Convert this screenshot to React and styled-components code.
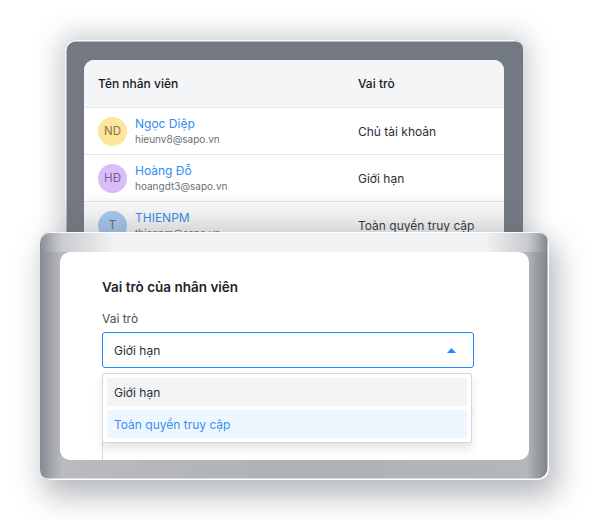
import React from "react";
import styled, { createGlobalStyle } from "styled-components";

const Global = createGlobalStyle`
  html, body { margin: 0; padding: 0; background: #ffffff; }
  body { font-family: Inter, "Noto Sans", "Liberation Sans", sans-serif; -webkit-font-smoothing: antialiased; }
  * { box-sizing: border-box; }
`;

const Stage = styled.div`
  width: 589px;
  height: 520px;
  overflow: hidden;
  padding-top: 40px;
  background: #ffffff;
`;

const BackWindow = styled.div`
  position: relative;
  margin-left: 65px;
  width: 458px;
  height: 220px;
  padding: 20px 19px 0 19px;
  border-radius: 9px;
  background: #737980;
  box-shadow: inset 1.5px 1.5px 0 rgba(255, 255, 255, 0.95),
    0 0 28px 4px rgba(70, 78, 90, 0.32);
  overflow: hidden;
`;

const Fade = styled.div`
  position: absolute;
  left: 0;
  right: 0;
  bottom: 0;
  height: 70px;
  background: linear-gradient(to bottom, rgba(110, 115, 122, 0), rgba(110, 115, 122, 0.34));
  pointer-events: none;
`;

const Table = styled.div`
  background: #ffffff;
  border-radius: 10px 10px 0 0;
  overflow: hidden;
  height: 100%;
`;

const Row = styled.div`
  display: grid;
  grid-template-columns: 260px 1fr;
  align-items: center;
  height: ${(p) => (p.$head ? 48 : 47)}px;
  padding-left: 14px;
  background: ${(p) => (p.$head ? "#f4f5f7" : "#ffffff")};
  border-bottom: 1px solid #e6e8eb;
`;

const HeadCell = styled.div`
  font-size: 12px;
  font-weight: 500;
  color: #15181c;
`;

const Person = styled.div`
  display: flex;
  align-items: center;
  gap: 8px;
`;

const Avatar = styled.div`
  width: 29px;
  height: 29px;
  border-radius: 50%;
  background: ${(p) => p.$bg};
  color: ${(p) => p.$fg};
  display: flex;
  align-items: center;
  justify-content: center;
  font-size: 11.5px;
  flex-shrink: 0;
`;

const Names = styled.div`
  display: flex;
  flex-direction: column;
  padding-top: 1px;
`;

const Name = styled.div`
  font-size: 12px;
  line-height: 16px;
  color: #2f8cf2;
`;

const Email = styled.div`
  font-size: 10px;
  line-height: 15px;
  color: #6b7077;
`;

const Role = styled.div`
  font-size: 12px;
  color: #2b2f34;
`;

const FrontWindow = styled.div`
  position: relative;
  z-index: 1;
  margin-left: 40px;
  margin-top: -28px;
  width: 509px;
  height: 248px;
  padding: 20px;
  border-radius: 10px;
  background:
    linear-gradient(90deg, rgba(244, 245, 246, 0) 0px, rgba(244, 245, 246, 0.96) 75px, rgba(244, 245, 246, 0.96) 445px, rgba(244, 245, 246, 0) 509px) top left / 100% 20px no-repeat,
    linear-gradient(90deg, #878b92 0px, #b9bbbf 22px, #aeb1b5 50%, #b3b6ba 487px, #7b8088 509px);
  box-shadow: inset -1.5px -1.5px 0 #ffffff, inset 0 1px 0 rgba(255, 255, 255, 0.9),
    6px 14px 30px 2px rgba(60, 68, 80, 0.38);
`;

const Card = styled.div`
  height: 100%;
  background: #ffffff;
  border-radius: 10px;
  overflow: hidden;
  padding: 26px 0 0 42px;
  display: flex;
  flex-direction: column;
`;

const Title = styled.div`
  font-size: 13.5px;
  line-height: 18px;
  font-weight: 600;
  color: #1f2328;
`;

const Label = styled.div`
  margin-top: 14px;
  font-size: 12px;
  line-height: 18px;
  color: #4a4f56;
`;

const SelectWrap = styled.div`
  position: relative;
  margin-top: 4px;
  width: 372px;
`;

const SelectBox = styled.div`
  height: 36px;
  border: 1px solid #1a8cff;
  border-radius: 3px;
  display: flex;
  align-items: center;
  justify-content: space-between;
  padding: 0 17px 0 11px;
  font-size: 12px;
  color: #2b2f34;
`;

const Menu = styled.div`
  position: absolute;
  top: 41px;
  left: 0;
  width: 370px;
  padding: 4px;
  background: #ffffff;
  border: 1px solid #d6d9dc;
  border-radius: 2px;
  box-shadow: 0 6px 9px rgba(0, 0, 0, 0.1);
  display: flex;
  flex-direction: column;
  gap: 4px;
  z-index: 2;
`;

const Option = styled.div`
  height: 28px;
  display: flex;
  align-items: center;
  padding-left: 7px;
  border-radius: 2px;
  font-size: 12px;
  background: ${(p) => (p.$active ? "#eef6ff" : "#f3f4f6")};
  color: ${(p) => (p.$active ? "#3a8ff2" : "#2b2f34")};
`;

const NextField = styled.div`
  margin-top: 45px;
  width: 372px;
  height: 70px;
  border: 1px solid #d3d6da;
  border-right-color: transparent;
  border-radius: 3px;
  flex-shrink: 0;
`;

const people = [
  { initials: "ND", bg: "#fde59c", fg: "#85764a", name: "Ngọc Diệp", email: "hieunv8@sapo.vn", role: "Chủ tài khoản" },
  { initials: "HĐ", bg: "#d9bcf8", fg: "#75609a", name: "Hoàng Đỗ", email: "hoangdt3@sapo.vn", role: "Giới hạn" },
  { initials: "T", bg: "#a9ccf2", fg: "#56667a", name: "THIENPM", email: "thienpm@sapo.vn", role: "Toàn quyền truy cập" },
];

export default function App() {
  return (
    <>
      <Global />
      <Stage>
        <BackWindow>
          <Table>
            <Row $head>
              <HeadCell>Tên nhân viên</HeadCell>
              <HeadCell>Vai trò</HeadCell>
            </Row>
            {people.map((p) => (
              <Row key={p.email}>
                <Person>
                  <Avatar $bg={p.bg} $fg={p.fg}>{p.initials}</Avatar>
                  <Names>
                    <Name>{p.name}</Name>
                    <Email>{p.email}</Email>
                  </Names>
                </Person>
                <Role>{p.role}</Role>
              </Row>
            ))}
          </Table>
          <Fade />
        </BackWindow>
        <FrontWindow>
          <Card>
            <Title>Vai trò của nhân viên</Title>
            <Label>Vai trò</Label>
            <SelectWrap>
              <SelectBox>
                <span>Giới hạn</span>
                <svg width="9" height="5" viewBox="0 0 9 5">
                  <polygon points="0,5 4.5,0 9,5" fill="#1a8cff" />
                </svg>
              </SelectBox>
              <Menu>
                <Option>Giới hạn</Option>
                <Option $active>Toàn quyền truy cập</Option>
              </Menu>
            </SelectWrap>
            <NextField />
          </Card>
        </FrontWindow>
      </Stage>
    </>
  );
}
